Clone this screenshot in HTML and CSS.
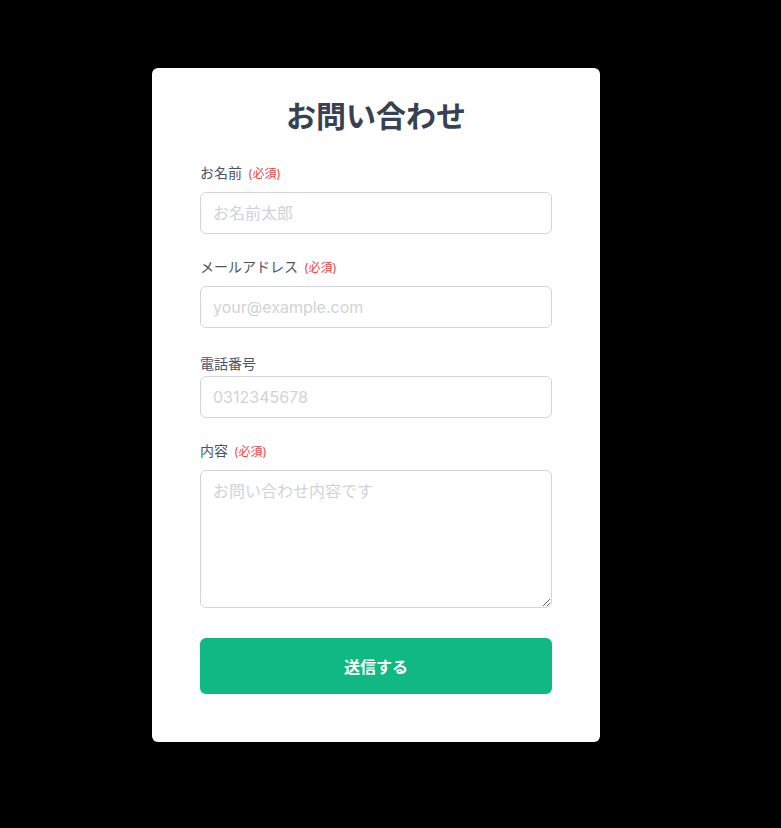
FILE: index.html
```html
<!DOCTYPE html>
<html lang="ja">
<head>
<meta charset="utf-8">
<title>お問い合わせ</title>
<link rel="stylesheet" href="styles.css">
</head>
<body>
<div class="card">
  <h1 class="title">お問い合わせ</h1>
  <form class="form">
    <div class="field">
      <label class="label">お名前<span class="req">(必須)</span></label>
      <input class="input" type="text" placeholder="お名前太郎">
    </div>
    <div class="field">
      <label class="label">メールアドレス<span class="req">(必須)</span></label>
      <input class="input" type="email" placeholder="your@example.com">
    </div>
    <div class="field">
      <label class="label label--plain">電話番号</label>
      <input class="input" type="tel" placeholder="0312345678">
    </div>
    <div class="field">
      <label class="label">内容<span class="req">(必須)</span></label>
      <textarea class="input textarea" rows="5" placeholder="お問い合わせ内容です"></textarea>
    </div>
    <button class="submit" type="button">送信する</button>
  </form>
</div>
</body>
</html>
```

FILE: styles.css
```css
* { box-sizing: border-box; }
html, body { margin: 0; padding: 0; background: #000; }
body {
  font-family: "Inter", "Noto Sans CJK JP", sans-serif;
  min-height: 828px;
  padding: 68px 0 0 152px;
}
.card {
  width: 448px;
  height: 674px;
  background: #fff;
  border-radius: 6px;
  padding: 30px 48px 48px;
}
.title {
  margin: 0 0 29px;
  font-size: 30px;
  line-height: 36px;
  font-weight: 700;
  color: #374151;
  text-align: center;
}
.form { display: flex; flex-direction: column; }
.field { display: flex; flex-direction: column; margin-bottom: 23px; }
.label {
  display: block;
  font-size: 14px;
  line-height: 20px;
  color: #4b5563;
  margin-bottom: 8px;
}
.label--plain { margin-top: 3px; margin-bottom: 2px; }
.req {
  font-size: 12px;
  color: #ef4444;
  margin-left: 6px;
}
.input {
  display: block;
  width: 352px;
  height: 42px;
  margin: 0;
  padding: 8px 12px;
  border: 1px solid #d1d5db;
  border-radius: 6px;
  font-family: "Inter", "Noto Sans CJK JP", sans-serif;
  font-size: 16px;
  line-height: 24px;
  color: #111827;
  background: #fff;
  outline: none;
}
.input::placeholder { color: #cfd3d9; }
.textarea { height: 138px; resize: vertical; }
.submit {
  margin-top: 7px;
  width: 352px;
  height: 56px;
  border: none;
  border-radius: 6px;
  background: #10b981;
  color: #fff;
  font-family: "Inter", "Noto Sans CJK JP", sans-serif;
  font-size: 16px;
  font-weight: 700;
  cursor: pointer;
}
```
